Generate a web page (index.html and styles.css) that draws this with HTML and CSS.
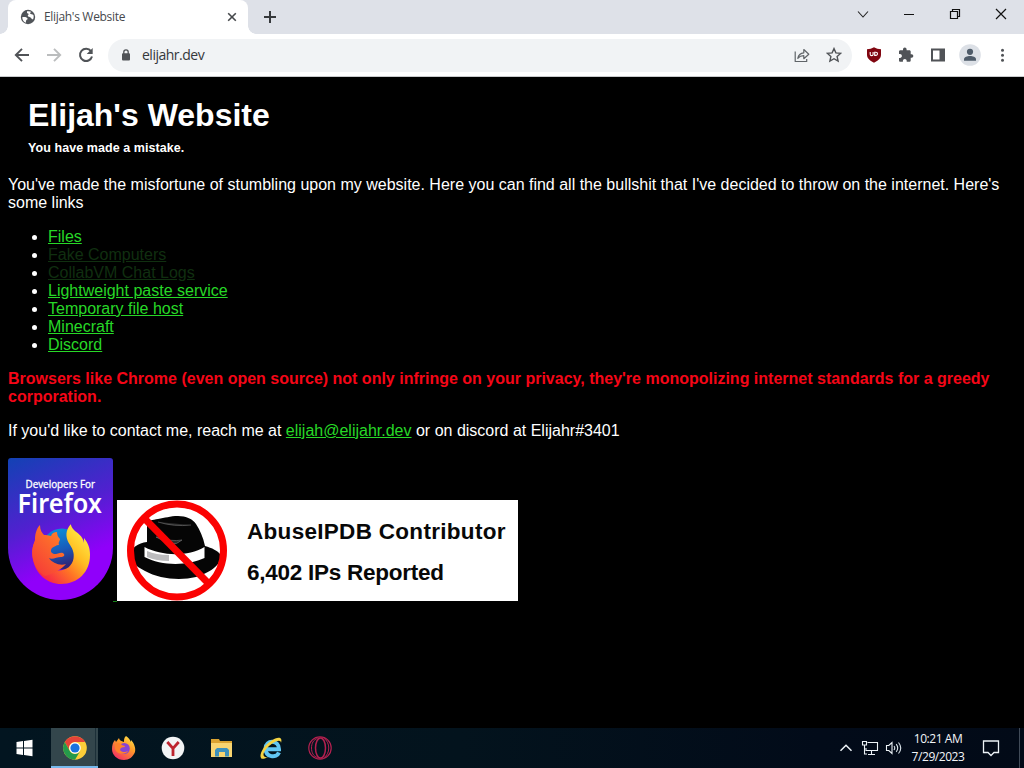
FILE: index.html
```html
<!DOCTYPE html>
<html lang="en">
<head>
<meta charset="utf-8">
<title>Elijah's Website</title>
<link rel="stylesheet" href="styles.css">
</head>
<body>
<div class="screen">
  <header class="tabstrip">
    <div class="flare flare-left"></div>
    <div class="tab">
      <svg class="favicon" width="16" height="16" viewBox="0 0 16 16"><circle cx="8" cy="8" r="7.2" fill="#505459"/><path d="M2.2 8.2C4 7.6 6.500 7.900 7.400 9.200c.6 1-.2 1.400-1 1.600-.5 1.200-.6 2.200-.5 3C3.700 12.800 2.300 10.800 2.200 8.200zM7 2.300c1.800-.4 3.300 0 4.400.8-.6.5-1.500.6-1.300 1.500.6.9 2.500.5 3.300 1.500.5 1.400.3 3-.3 4.200-1.100.2-1.700-1-2.600-1.800-1-.7-2.400-.5-2.700-1.700-.2-1 .9-1.200.9-1.800 0-.7-1.500-.6-1.700-1.300z" fill="#fff"/></svg>
      <span class="tab-title">Elijah's Website</span>
      <svg class="tab-close" width="10" height="10" viewBox="0 0 10 10"><path d="M1.200 1.200 8.800 8.800M8.800 1.200 1.200 8.800" stroke="#45484b" stroke-width="1.600"/></svg>
    </div>
    <div class="flare flare-right"></div>
    <svg class="newtab" width="14" height="14" viewBox="0 0 14 14"><path d="M7 1v12M1 7h12" stroke="#36393c" stroke-width="2"/></svg>
    <div class="caption">
      <svg width="46" height="28" viewBox="0 0 46 28"><path d="m18 11.500 5 5.500 5-5.500" fill="none" stroke="#222" stroke-width="1.100"/></svg>
      <svg width="46" height="28" viewBox="0 0 46 28"><path d="M18 14.500h10" stroke="#111"/></svg>
      <svg width="46" height="28" viewBox="0 0 46 28"><path d="M18.500 11.500h7v7h-7zM20.500 11.500v-2h7v7h-2" fill="none" stroke="#111" stroke-width="1.200"/></svg>
      <svg width="46" height="28" viewBox="0 0 46 28"><path d="m18 9 10 10M28 9 18 19" stroke="#111" stroke-width="1.200"/></svg>
    </div>
  </header>

  <nav class="toolbar">
    <div class="nav">
      <svg width="16" height="16" viewBox="0 0 16 16"><path d="M15 8H2M8 1.800 1.800 8 8 14.200" fill="none" stroke="#505357" stroke-width="1.900"/></svg>
      <svg width="16" height="16" viewBox="0 0 16 16"><path d="M1 8h13M8 1.800 14.200 8 8 14.200" fill="none" stroke="#bbbdbe" stroke-width="1.900"/></svg>
      <svg width="16" height="16" viewBox="0 0 16 16"><path d="M13 4.200A6.100 6.100 0 1 0 14 9.500" fill="none" stroke="#505357" stroke-width="2"/><path d="M14.700 1v6H8.700z" fill="#505357"/></svg>
    </div>
    <div class="omnibox">
      <svg class="lock" width="10" height="12" viewBox="0 0 10 12"><rect x="1" y="4.200" width="8" height="7.300" rx="1" fill="#505357"/><path d="M2.800 5V3a2.200 2.200 0 0 1 4.400 0v2" fill="none" stroke="#505357" stroke-width="1.300"/></svg>
      <span class="url">elijahr.dev</span>
      <svg class="share" width="16" height="16" viewBox="0 0 16 16"><path d="M1.200 4.500v10h11.500v-2.500M3.800 11.300c.6-3.400 2.500-5.300 6-5.500V2.500l5 4.700-5 4.500V8.700c-2.700 0-4.500.8-6 2.600z" fill="none" stroke="#606468" stroke-width="1.200" stroke-linejoin="round"/></svg>
      <svg width="16" height="16" viewBox="0 0 16 16"><path d="m8 1.600 1.900 4.300 4.700.5L11.100 9.500l1 4.600L8 11.700l-4.100 2.400 1-4.600L1.400 6.400l4.700-.5z" fill="none" stroke="#505357" stroke-width="1.400"/></svg>
    </div>
    <div class="extensions">
      <svg width="16" height="16" viewBox="0 0 16 16"><path d="M8 .3c2 1.300 4.500 1.800 7 1.900v5.600c0 4-3.500 6.300-7 8-3.500-1.700-7-4-7-8V2.200C3.500 2.100 6 1.600 8 .3z" fill="#800610"/><path d="M4.200 5v2.200a1.400 1.400 0 0 0 2.900 0V5M8.700 5.200v3.200h1.200a1.600 1.600 0 0 0 0-3.200z" fill="none" stroke="#fff" stroke-width="1.100"/></svg>
      <svg width="16" height="16" viewBox="0 0 16 16"><path d="M13.600 7.300h-.9V4.500c0-.7-.6-1.300-1.300-1.300H8.600v-.9a1.800 1.800 0 0 0-3.600 0v.9H2.300C1.600 3.200 1 3.800 1 4.500v2.600h1c1.100 0 1.900.8 1.900 1.900S3.100 10.900 2 10.900H1v2.600c0 .7.600 1.300 1.300 1.300h2.600v-1c0-1.100.8-1.900 1.900-1.900s1.900.8 1.900 1.900v1h2.700c.7 0 1.300-.6 1.300-1.300v-2.700h.9a1.750 1.750 0 0 0 0-3.500z" fill="#505357"/></svg>
      <svg width="16" height="16" viewBox="0 0 16 16"><path d="M1 1.500h14v13H1zM3 3.500v9h6.500v-9z" fill="#505357" fill-rule="evenodd"/></svg>
      <svg width="22" height="22" viewBox="0 0 22 22"><circle cx="11" cy="11" r="10.800" fill="#dce0e6"/><circle cx="11" cy="7.800" r="3.100" fill="#4e5b69"/><path d="M5 16.700v-1.500c0-2 3.300-3.200 6-3.200s6 1.200 6 3.200v1.500z" fill="#4e5b69"/></svg>
      <svg width="16" height="16" viewBox="0 0 16 16" fill="#505357"><circle cx="8.500" cy="3.200" r="1.500"/><circle cx="8.500" cy="8.200" r="1.500"/><circle cx="8.500" cy="13.200" r="1.500"/></svg>
    </div>
  </nav>

  <main class="page">
    <div class="heading">
      <h1>Elijah's Website</h1>
      <h6>You have made a mistake.</h6>
    </div>
    <p>You've made the misfortune of stumbling upon my website. Here you can find all the bullshit that I've decided to throw on the internet. Here's<br>some links</p>
    <ul>
      <li><a>Files</a></li>
      <li><a class="dead">Fake Computers</a></li>
      <li><a class="dead">CollabVM Chat Logs</a></li>
      <li><a>Lightweight paste service</a></li>
      <li><a>Temporary file host</a></li>
      <li><a>Minecraft</a></li>
      <li><a>Discord</a></li>
    </ul>
    <p class="warning">Browsers like Chrome (even open source) not only infringe on your privacy, they're monopolizing internet standards for a greedy<br>corporation.</p>
    <p>If you'd like to contact me, reach me at <a>elijah@elijahr.dev</a> or on discord at Elijahr#3401</p>
    <div class="badges">
      <svg class="firefox-badge" width="105" height="142" viewBox="0 0 105 142">
        <defs>
          <linearGradient id="bg" x1="0" y1="0" x2=".35" y2="1"><stop offset="0" stop-color="#1242b4"/><stop offset=".5" stop-color="#5120d0"/><stop offset=".85" stop-color="#9000fa"/></linearGradient>
          <linearGradient id="tail" x1=".85" y1="0" x2=".1" y2=".75"><stop offset="0" stop-color="#fff14a"/><stop offset=".4" stop-color="#ffbd22"/><stop offset=".68" stop-color="#ff7225"/><stop offset="1" stop-color="#f72c45"/></linearGradient>
          <linearGradient id="head" x1=".8" y1="0" x2=".1" y2="1"><stop offset="0" stop-color="#ff8426"/><stop offset="1" stop-color="#f63838"/></linearGradient>
          <linearGradient id="globe" x1="0" y1="0" x2=".3" y2="1"><stop offset="0" stop-color="#0699df"/><stop offset=".6" stop-color="#185bbb"/><stop offset="1" stop-color="#302477"/></linearGradient>
        </defs>
        <path d="M0 3q0-3 3-3h99q3 0 3 3v86.500a52.500 52.500 0 0 1-105 0z" fill="url(#bg)"/>
        <text class="badge-small" x="17.500" y="30" textLength="69.500" lengthAdjust="spacingAndGlyphs">Developers For</text>
        <text class="badge-large" x="9.500" y="55" textLength="84.500" lengthAdjust="spacingAndGlyphs">Firefox</text>
        <circle cx="54" cy="91" r="20.500" fill="url(#globe)"/>
        <path d="M62.500 66.500c-5 6-5 12-2 18 4 6 6 10 5 16-1 7-7 12-15 12-7 0-12-4-14-10L32 78c-8 7-9 15-7 24 3 14 14 24 28 24 17 0 29-12 29-29 0-7-2-12-6-17v5c-1-7-7-10-10-13-2-2-3-4-3-5.500z" fill="url(#tail)"/>
        <path d="M32 67c-4 4-5 10-5 15-6 14-1 30 10 36 9-2 18-8 21-12-6 2-14-1-17-6 3 2 8-1 12-1 2 0 4-1 3-3-2-3-6 0-10 0-3-1-4-3-2-6 2-1 4-3 7-3-1-3 1-4 1-6-2-2-3-4-3-7-3 0-5 1-6 4-3-1-5-1-7-1-2-2-4-5-4-10z" fill="url(#head)"/>
      </svg>
      <a class="badge-gap"></a>
      <div class="abuse">
        <svg width="100" height="101" viewBox="0 0 100 101">
          <path d="M3 55C4 48 11 43 20 42V25c0-5 6-5 11-6 7-1 12-3 20-3 8 0 15 3 18 8 4 6 7 13 9 22 7 2 13 5 15 8 3 9-8 18-24 23-16 4-37 2-51-6-10-5-15-10-15-16z" fill="#050505"/>
          <path d="M17.500 47c17 9 43 10 60 0v11c-17 8-43 8-60-1z" fill="#fff"/>
          <path d="M20 51q9 4 22 4v6q-13 0-22-4z" fill="#bcbcbe"/>
          <path d="M31 22q16 5 33 3M29 37q16 5 26 3-5 5-12 4z" fill="#777" fill-opacity=".35" stroke="#777" stroke-width=".6"/>
          <circle cx="50" cy="50.500" r="46.500" fill="none" stroke="#fb0202" stroke-width="7"/>
          <path d="m17 18 65 66" stroke="#fb0202" stroke-width="7"/>
        </svg>
        <div class="abuse-text"><span class="abuse-name">AbuseIPDB Contributor</span><span class="abuse-count">6,402 IPs Reported</span></div>
      </div>
    </div>
  </main>

  <footer class="taskbar">
    <div class="apps">
      <div class="app"><svg width="24" height="24" viewBox="0 0 24 24" fill="#fff"><path d="m3.500 6 6.500-1v6.500H3.500zM11 4.900l8.500-1.200v7.800H11zM3.500 12.500H10V19l-6.500-1zM11 12.500h8.500v7.800L11 19.100z"/></svg></div>
      <div class="app active"><svg width="24" height="24" viewBox="0 0 24 24"><circle cx="12" cy="12" r="11.800" fill="#fccd38"/><path d="M1.800 6A11.800 11.800 0 0 1 22.200 6H12a6 6 0 0 0-5.200 9z" fill="#e44338"/><path d="M1.800 6A11.800 11.800 0 0 0 12 23.800L17.200 15A6 6 0 0 1 6.800 15z" fill="#25994b"/><circle cx="12" cy="12" r="5.800" fill="#fff"/><circle cx="12" cy="12" r="4.600" fill="#1973df"/></svg></div>
      <div class="app"><svg width="24" height="24" viewBox="0 0 24 24"><defs><linearGradient id="fx" x1=".85" y1="0" x2=".2" y2="1"><stop stop-color="#ffe94c"/><stop offset=".4" stop-color="#ff9b28"/><stop offset="1" stop-color="#f32867"/></linearGradient></defs><path d="M14 0c3 2 4 4 5 6V4c3 3 5 8 4 12-2 5-6 8-11 8C5 24 0 19 0 13c0-4 1-7 3-9l1 2 3-4c0 2 2 3 5 4 0-3 0-4 2-6z" fill="url(#fx)"/><circle cx="12.200" cy="12.500" r="5.600" fill="#8844d4"/><path d="M3 8c3-1 5-1 7 1 1 1 3 0 3 2-3 0-5 1-5 3 2 3 6 2 8 1-2 4-11 4-13-2z" fill="#ff812b"/></svg></div>
      <div class="app"><svg width="24" height="24" viewBox="0 0 24 24"><circle cx="12" cy="12" r="11.300" fill="#f2f4f5"/><path d="M6.300 6 12 12.500 17.700 6M12 12v8" fill="none" stroke="#bd252f" stroke-width="2.800"/></svg></div>
      <div class="app"><svg width="24" height="24" viewBox="0 0 24 24"><path d="M1 3h8l1 2h12v16H1z" fill="#dba331"/><path d="M1 7h21v14H1z" fill="#f9d571"/><path d="M5 20.500V14l2-2h10l2 2v6.500h-4V16H9v4.500z" fill="#3e91bc"/></svg></div>
      <div class="app"><svg width="24" height="24" viewBox="0 0 24 24"><path d="M20 16.500c-2.500 6-13.500 5-13.500-4s13.500-9 13.500.8H7" fill="none" stroke="#62c7f3" stroke-width="4"/><path d="M22 7C24 1 19 0 12 5 4 10 0 19 2 22c1 2 5 0 7-1-6 1-6-4 0-10 5-5 13-9 13-4z" fill="#f5d342"/></svg></div>
      <div class="app"><svg width="24" height="24" viewBox="0 0 24 24" fill="none" stroke="#b52050"><circle cx="12" cy="12" r="11.200" stroke-width="1.200"/><ellipse cx="12.500" cy="12" rx="5" ry="10" stroke-width="1.500"/><path d="M9.500 2.500C1.500 4 1.500 20 9.500 21.500M15.500 2C22.500 6 22.500 18 15.500 22" stroke-width="1"/></svg></div>
    </div>
    <div class="tray">
      <svg class="t-chevron" width="14" height="16" viewBox="0 0 14 16"><path d="m1.500 10.800 5.500-5.500 5.500 5.500" fill="none" stroke="#edf3f7" stroke-width="1.500"/></svg>
      <svg class="t-net" width="18" height="16" viewBox="0 0 18 16"><path d="M6.500 2.500h10v8H5V8M10.500 10.500v3.500M7 14.500h7M1.500 1.500h4V5h-4zM3.500 5v9H6" fill="none" stroke="#edf3f7" stroke-width="1.100"/></svg>
      <svg class="t-vol" width="18" height="16" viewBox="0 0 18 16"><path d="M1.500 5.500h2.300L7 2.500v11l-3.200-3H1.500z" fill="none" stroke="#edf3f7" stroke-width="1.100"/><path d="M9 6q1.500 2 0 4M11.200 4.200q3 3.800 0 7.600M13.500 2.500q4.500 5.500 0 11" fill="none" stroke="#dce5eb" stroke-width="1.100"/></svg>
      <div class="clock"><span class="time">10:21 AM</span><span class="date">7/29/2023</span></div>
      <svg class="t-note" width="18" height="18" viewBox="0 0 18 18"><path d="M1.500 2h15v11.500H12l-3 3-3-3H1.500z" fill="none" stroke="#edf3f7" stroke-width="1.300"/></svg>
      <div class="show-desktop"></div>
    </div>
  </footer>
</div>
</body>
</html>
```
FILE: styles.css
```css
* { box-sizing: border-box; }
body { margin: 0; background: #000; }
svg { display: block; flex: none; }
.screen { width: 1024px; height: 768px; display: flex; flex-direction: column; overflow: hidden; font-family: "Liberation Sans", Arial, sans-serif; }

.tabstrip { height: 34px; flex: none; display: flex; background: #dee1e8; }
.tab { width: 240px; height: 34px; display: flex; align-items: center; padding: 0 12px; background: #fff; border-radius: 8px 8px 0 0; }
.flare { width: 8px; height: 8px; align-self: flex-end; }
.flare-left { background: radial-gradient(circle at 0 0, #dee1e8 7.5px, #fff 8px); }
.flare-right { background: radial-gradient(circle at 100% 0, #dee1e8 7.5px, #fff 8px); }
.tab-title { margin-left: 8px; flex: 1; white-space: nowrap; font: 12px/16px "Open Sans", sans-serif; letter-spacing: -0.32px; color: #45484c; }
.tab-close { margin-right: -1px; }
.newtab { margin: 10px 0 0 7px; }
.caption { display: flex; margin-left: auto; }

.toolbar { height: 43px; flex: none; display: flex; align-items: center; background: #fff; border-bottom: 1px solid #c9cbcd; padding: 0 14px; }
.nav { display: flex; gap: 16px; width: 94px; }
.omnibox { width: 744px; height: 33px; border-radius: 17px; background: #f1f3f5; display: flex; align-items: center; padding: 0 10px 0 13px; gap: 16px; }
.url { flex: 1; margin-left: -5px; font: 14px/18px "Open Sans", sans-serif; letter-spacing: -0.5px; color: #35383b; }
.extensions { display: flex; align-items: center; gap: 16px; margin-left: 14px; }
.extensions svg:nth-child(4) { margin: 0 -3px; }

.page { flex: 1; min-height: 0; padding: 20px 8px 0; background: #000; color: #fff; font-size: 16px; line-height: 18px; }
.heading { padding-left: 20px; height: 79px; }
h1 { margin: 0; font-size: 32px; line-height: 36px; white-space: nowrap; }
h6 { margin: 7px 0 0; font-size: 12.5px; line-height: 16px; letter-spacing: 0.07px; white-space: nowrap; }
.page p { margin: 0 0 16px; white-space: nowrap; }
.page ul { margin: 0 0 16px; padding-left: 40px; }
.page a { color: #27d827; text-decoration: underline; }
.page a.dead { color: #102f10; }
.page .warning { color: #f50617; font-weight: bold; }
.badges { display: flex; align-items: flex-end; height: 143px; margin-top: 18px; }
.firefox-badge { align-self: flex-start; }
.badge-small { font: 10px "Open Sans", sans-serif; fill: #fff; stroke: #fff; stroke-width: 0.3px; }
.badge-large { font: 600 27px "Noto Sans", sans-serif; fill: #fff; }
.page .badge-gap { width: 4px; height: 1px; margin-bottom: -1px; background: #168016; }
.abuse { width: 401px; height: 101px; display: flex; padding-left: 10px; background: #fff; color: #080808; font-weight: bold; white-space: nowrap; }
.abuse-text { display: flex; flex-direction: column; padding: 18px 0 0 20px; gap: 13px; font-size: 22.5px; line-height: 28px; }
.abuse-name { letter-spacing: 0.3px; }
.abuse-count { letter-spacing: -0.25px; }

.taskbar { height: 40px; flex: none; display: flex; justify-content: space-between; background: linear-gradient(90deg, #021520, #03131d 45%, #020b19 80%, #020a17); }
.apps { display: flex; gap: 2px; }
.app { width: 47px; height: 40px; display: flex; align-items: center; justify-content: center; }
.app:first-child { width: 49px; }
.app.active { background: linear-gradient(90deg, #33464c 44px, #1b2f38 44px, #1b2f38 45px, #33464c 45px); border-bottom: 2px solid #76b9ed; padding-top: 2px; }
.tray { display: flex; align-items: center; color: #f2f5f8; }
.t-net { margin-left: 8px; }
.t-vol { margin-left: 6px; }
.clock { width: 60px; margin-left: 5px; margin-right: 1px; display: flex; flex-direction: column; align-items: center; font: 12px/18px "Open Sans", sans-serif; letter-spacing: -0.45px; white-space: nowrap; }
.t-note { margin-left: 13px; }
.show-desktop { width: 5px; height: 40px; margin-left: 19px; border-left: 1px solid #414b58; }
```
